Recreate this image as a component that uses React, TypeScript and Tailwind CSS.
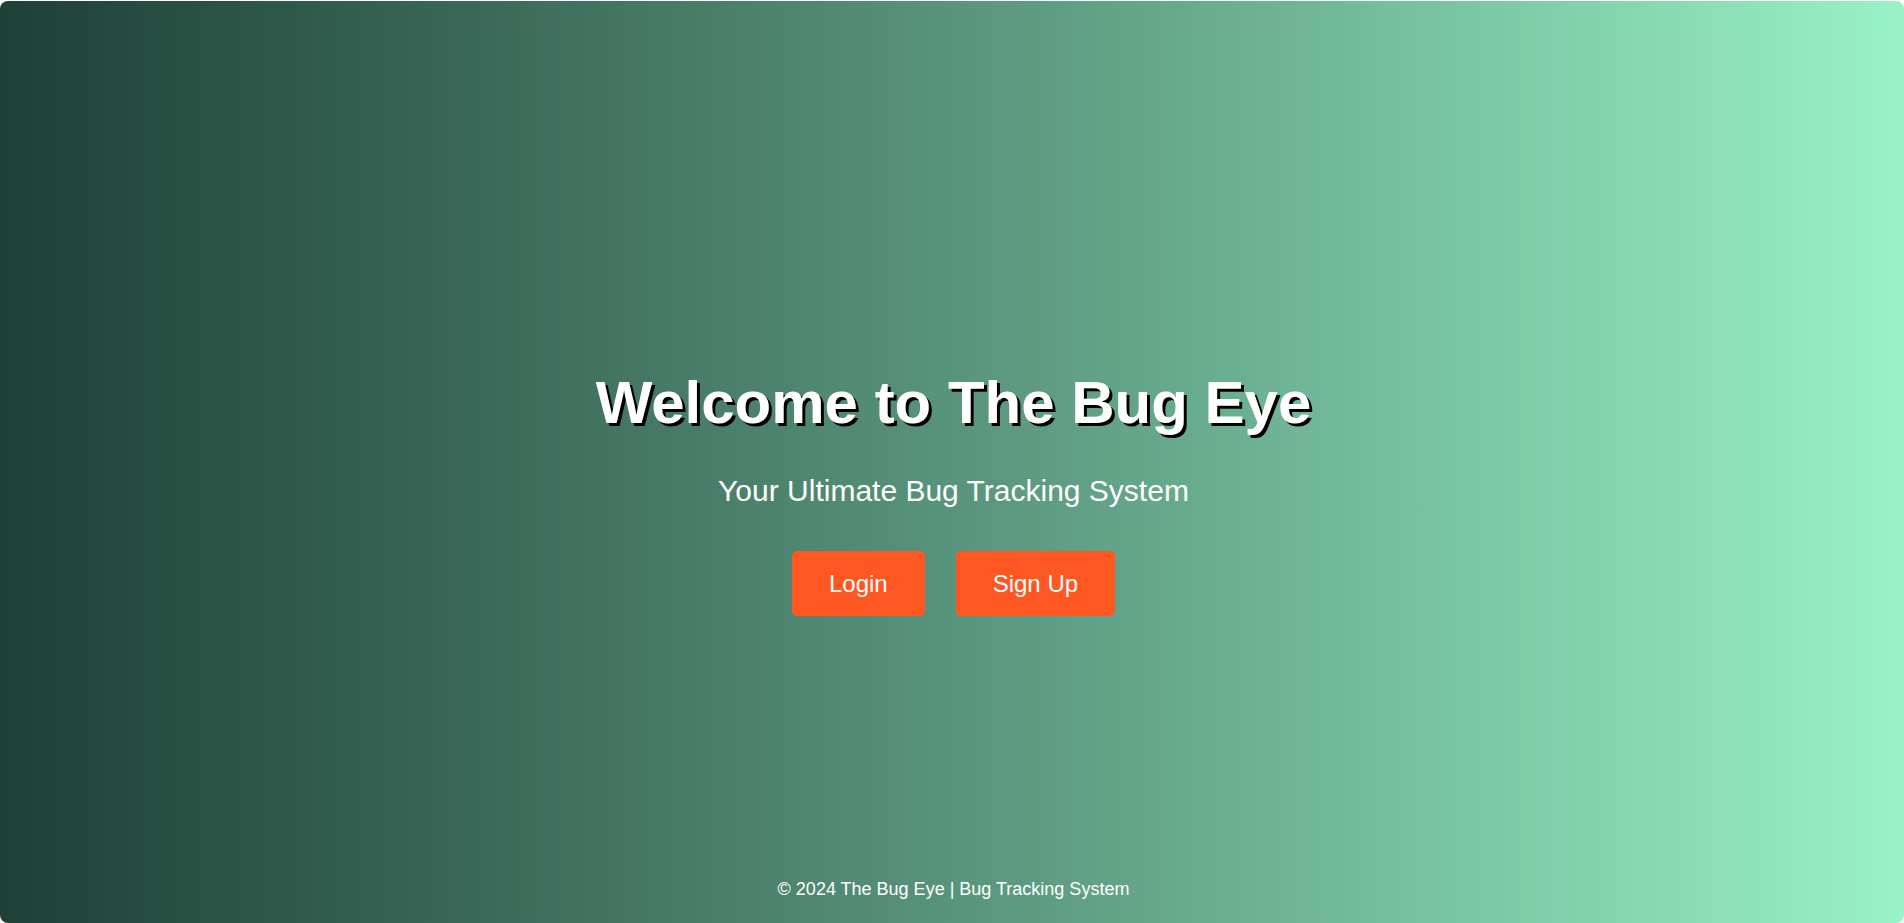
import React from 'react';

const App: React.FC = () => {
  return (
    <div className="w-full h-[923px] bg-white pt-px" style={{ fontFamily: '"Liberation Sans", Arial, sans-serif' }}>
      <div className="h-full flex flex-col rounded-lg bg-gradient-to-r from-[#1f4037] to-[#99f2c8] text-white pl-[3px]">
        <main className="flex-1 flex flex-col items-center pt-[367px]">
          <h1 className="text-[60px] leading-[69px] font-bold [text-shadow:3px_3px_0_#000]">
            Welcome to The Bug Eye
          </h1>
          <p className="mt-[37px] text-[30px] leading-[34px]">Your Ultimate Bug Tracking System</p>
          <div className="mt-[43px] flex gap-[31px]">
            <button className="h-[65px] px-[37px] bg-[#ff5722] rounded-[5px] text-[24px] text-white">
              Login
            </button>
            <button className="h-[65px] px-[37px] bg-[#ff5722] rounded-[5px] text-[24px] text-white">
              Sign Up
            </button>
          </div>
        </main>
        <footer className="pt-[17px] pb-[23px] text-center text-[18px] leading-[21px]">
          © 2024 The Bug Eye | Bug Tracking System
        </footer>
      </div>
    </div>
  );
};

export default App;
